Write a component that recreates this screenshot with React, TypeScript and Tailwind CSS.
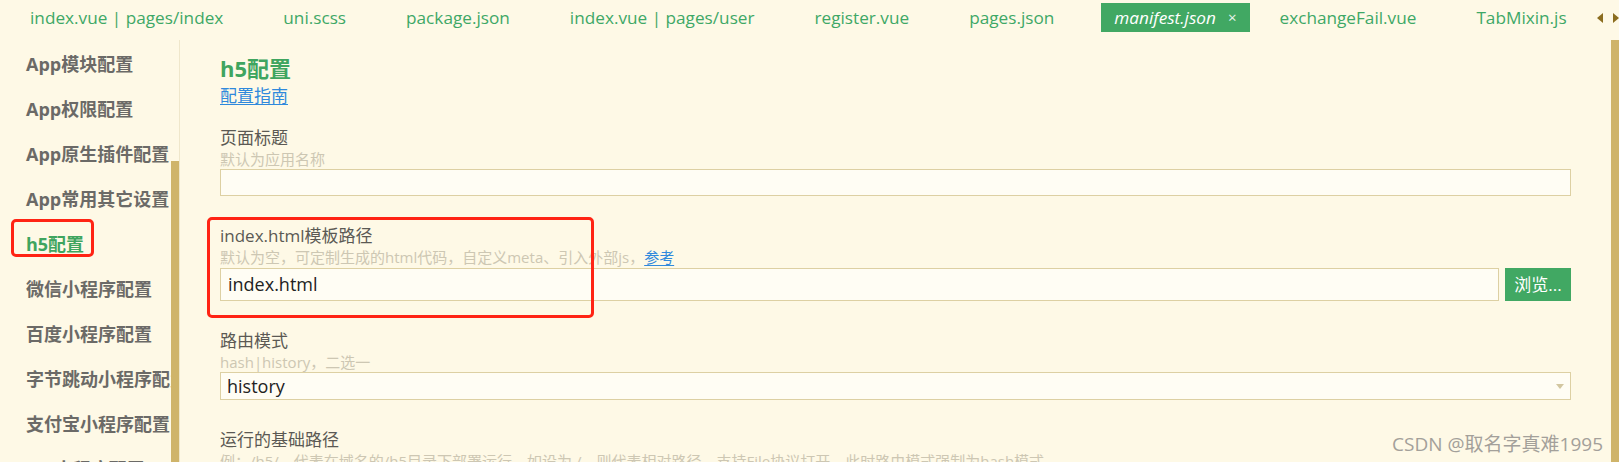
import React from 'react';

const tabs = [
  { name: 'index.vue | pages/index' },
  { name: 'uni.scss' },
  { name: 'package.json' },
  { name: 'index.vue | pages/user' },
  { name: 'register.vue' },
  { name: 'pages.json' },
  { name: 'manifest.json', active: true },
  { name: 'exchangeFail.vue' },
  { name: 'TabMixin.js' },
];

const menu = [
  'App模块配置',
  'App权限配置',
  'App原生插件配置',
  'App常用其它设置',
  'h5配置',
  '微信小程序配置',
  '百度小程序配置',
  '字节跳动小程序配置',
  '支付宝小程序配置',
  'QQ小程序配置',
];

const Field: React.FC<{ label: string; hint: React.ReactNode; className?: string; children: React.ReactNode }> = ({
  label,
  hint,
  className = '',
  children,
}) => (
  <div className={className}>
    <div className="text-[17px] leading-[22px] text-[#5b5954] whitespace-nowrap">{label}</div>
    <div className="text-[15px] leading-[20px] text-[#cdc7b3] whitespace-nowrap">{hint}</div>
    {children}
  </div>
);

export default function App() {
  return (
    <div className="relative w-full h-[462px] overflow-hidden bg-[#fef9e6] flex flex-col font-['Open_Sans','Noto_Sans_CJK_SC',sans-serif]">
      {/* Editor tabs */}
      <div className="h-[40px] shrink-0 flex items-start pt-[3px] overflow-hidden">
        {tabs.map((t) =>
          t.active ? (
            <div
              key={t.name}
              className="shrink-0 ml-[17px] h-[29px] px-[13px] flex items-center gap-[12px] bg-[#41a863] text-white italic text-[17.2px] whitespace-nowrap"
            >
              <span>{t.name}</span>
              <span className="not-italic text-[15px] text-[#e8f5ec]">×</span>
            </div>
          ) : (
            <div
              key={t.name}
              className="shrink-0 h-[29px] px-[30px] flex items-center text-[17.2px] text-[#3ea866] whitespace-nowrap"
            >
              {t.name}
            </div>
          )
        )}
        <div className="shrink-0 ml-auto mr-[6px] h-[29px] flex items-center gap-[10px]">
          <svg width="6" height="10" viewBox="0 0 6 10">
            <path d="M6 0 L0 5 L6 10 Z" fill="#8b6d1f" />
          </svg>
          <svg width="6" height="10" viewBox="0 0 6 10">
            <path d="M0 0 L6 5 L0 10 Z" fill="#8b6d1f" />
          </svg>
        </div>
      </div>

      <div className="flex-1 min-h-0 flex">
        {/* Sidebar */}
        <div className="w-[180px] shrink-0 flex border-r border-[#efe7cb]">
          <div className="w-[171px] overflow-hidden pt-[2px]">
            {menu.map((m) => (
              <div
                key={m}
                className={`h-[45px] flex items-center pl-[26px] text-[18px] font-bold whitespace-nowrap ${
                  m === 'h5配置' ? 'text-[#3fa55f]' : 'text-[#6b6a67]'
                }`}
              >
                {m}
              </div>
            ))}
          </div>
          <div className="w-[8px] pt-[121px] flex flex-col">
            <div className="flex-1 bg-[#cfb46a]" />
          </div>
        </div>

        {/* Form */}
        <div className="flex-1 min-w-0 pl-[40px] pr-[40px] pt-[13px]">
          <h1 className="text-[22px] leading-[30px] font-bold text-[#3fa55f]">h5配置</h1>
          <a className="block w-fit mt-[2px] text-[17px] leading-[22px] text-[#2f89dc] underline underline-offset-2">配置指南</a>

          <Field label="页面标题" hint="默认为应用名称" className="mt-[20px]">
            <div className="h-[27px] border border-[#ddd0a3] bg-[#fffdf4]" />
          </Field>

          <Field
            label="index.html模板路径"
            hint={
              <>
                默认为空，可定制生成的html代码，自定义meta、引入外部js，
                <span className="text-[#2f89dc] underline underline-offset-2">参考</span>
              </>
            }
            className="mt-[29px]"
          >
            <div className="flex gap-[6px] mt-[1px]">
              <div className="flex-1 h-[33px] border border-[#ddd0a3] bg-[#fffdf4] flex items-center pl-[7px] text-[18px] text-[#222]">
                index.html
              </div>
              <button className="w-[66px] h-[33px] bg-[#41a863] text-white text-[17px]">浏览...</button>
            </div>
          </Field>

          <Field label="路由模式" hint="hash|history，二选一" className="mt-[29px]">
            <div className="h-[28px] border border-[#ddd0a3] bg-[#fffdf4] flex items-center justify-between pl-[6px] pr-[6px] text-[18px] text-[#222]">
              <span>history</span>
              <svg width="8" height="5" viewBox="0 0 8 5">
                <path d="M0 0 L8 0 L4 5 Z" fill="#d3c7a0" />
              </svg>
            </div>
          </Field>

          <Field
            label="运行的基础路径"
            hint="例：/h5/，代表在域名的/h5目录下部署运行。如设为./，则代表相对路径，支持File协议打开，此时路由模式强制为hash模式。"
            className="mt-[29px]"
          >
            <div className="h-[28px] border border-[#ddd0a3] bg-[#fffdf4]" />
          </Field>
        </div>

        {/* Right scrollbar */}
        <div className="w-[8px] shrink-0 bg-[#cfb46a]" />
      </div>

      {/* Annotation boxes */}
      <div className="absolute left-[11px] top-[219px] w-[83px] h-[38px] border-[3px] border-[#ff2414] rounded-[5px]" />
      <div className="absolute left-[207px] top-[217px] w-[387px] h-[101px] border-[3px] border-[#ff2414] rounded-[5px]" />

      {/* Watermark */}
      <div className="absolute right-[16px] bottom-[6px] text-[19px] leading-[24px] text-[#a3a09a] whitespace-nowrap">
        CSDN @取名字真难1995
      </div>
    </div>
  );
}
